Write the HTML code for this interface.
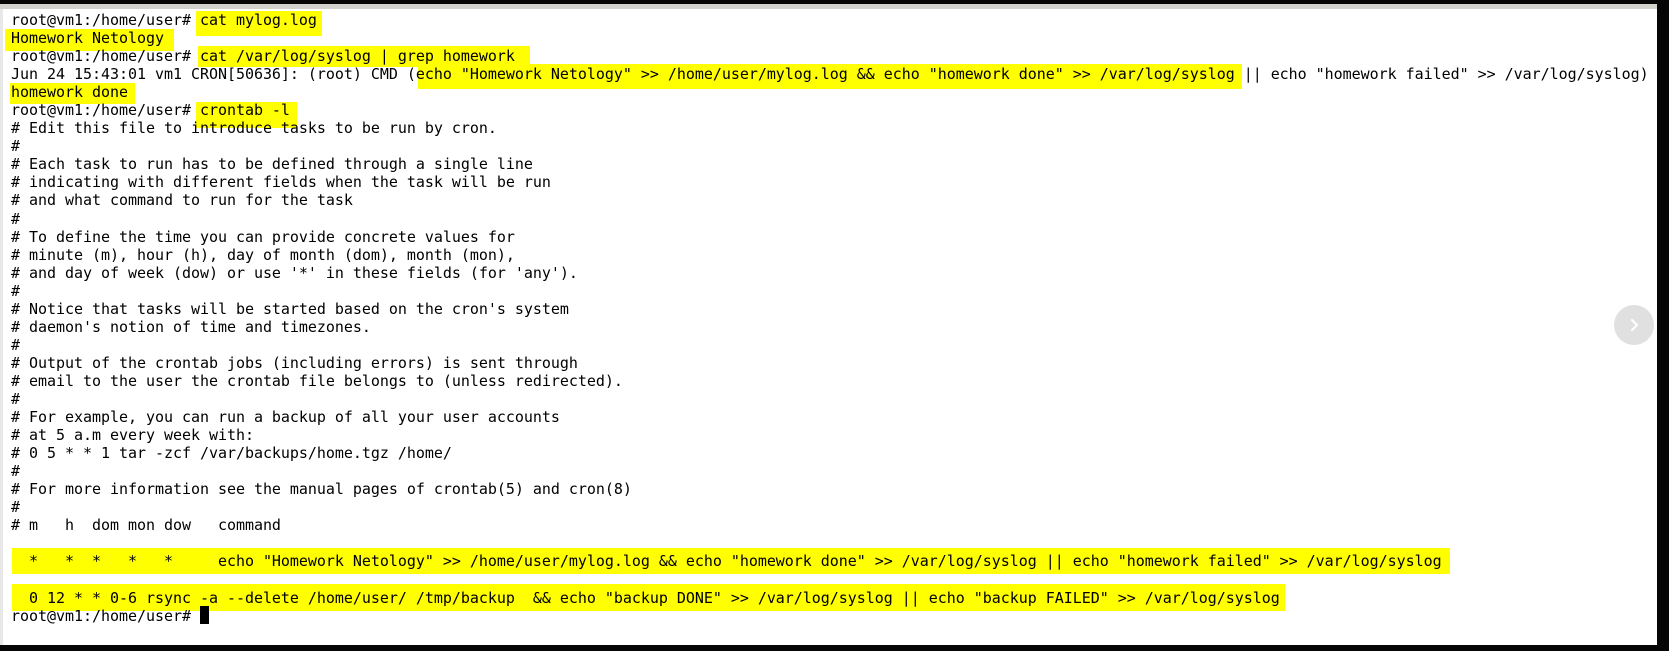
<!DOCTYPE html>
<html><head><meta charset="utf-8"><style>
html,body{margin:0;padding:0;}
body{width:1669px;height:651px;background:#060606;position:relative;overflow:hidden;}
#scr{position:absolute;left:0;top:4px;width:1657px;height:641px;background:#fff;}
#topbar{position:absolute;left:0;top:4px;width:1657px;height:5px;background:#d4d2cc;}
#leftbar{position:absolute;left:0;top:9px;width:3px;height:636px;background:#e8e8e8;}
.hl{position:absolute;background:#ffff00;}
pre{position:absolute;left:11px;top:11px;margin:0;font-family:"DejaVu Sans Mono","Liberation Mono",monospace;font-size:15px;letter-spacing:-0.033px;line-height:18.05px;color:#000;}
#cur{position:absolute;left:200px;top:606px;width:9px;height:18px;background:#000;}
#btn{position:absolute;left:1614px;top:305px;width:40px;height:40px;border-radius:50%;background:#e0e0e0;}
</style></head><body>
<div id="scr"></div><div id="topbar"></div><div id="leftbar"></div>
<div class="hl" style="left:196px;top:11px;width:126px;height:25px"></div>
<div class="hl" style="left:5px;top:29px;width:169px;height:22px"></div>
<div class="hl" style="left:198px;top:46px;width:332px;height:21px"></div>
<div class="hl" style="left:418px;top:64px;width:824px;height:25px"></div>
<div class="hl" style="left:10px;top:83px;width:125px;height:21px"></div>
<div class="hl" style="left:196px;top:102px;width:101px;height:26px"></div>
<div class="hl" style="left:12px;top:548px;width:1438px;height:26px"></div>
<div class="hl" style="left:12px;top:584px;width:1273px;height:27px"></div>
<pre>root@vm1:/home/user# cat mylog.log
Homework Netology
root@vm1:/home/user# cat /var/log/syslog | grep homework
Jun 24 15:43:01 vm1 CRON[50636]: (root) CMD (echo "Homework Netology" >> /home/user/mylog.log && echo "homework done" >> /var/log/syslog || echo "homework failed" >> /var/log/syslog)
homework done
root@vm1:/home/user# crontab -l
# Edit this file to introduce tasks to be run by cron.
#
# Each task to run has to be defined through a single line
# indicating with different fields when the task will be run
# and what command to run for the task
#
# To define the time you can provide concrete values for
# minute (m), hour (h), day of month (dom), month (mon),
# and day of week (dow) or use '*' in these fields (for 'any').
#
# Notice that tasks will be started based on the cron's system
# daemon's notion of time and timezones.
#
# Output of the crontab jobs (including errors) is sent through
# email to the user the crontab file belongs to (unless redirected).
#
# For example, you can run a backup of all your user accounts
# at 5 a.m every week with:
# 0 5 * * 1 tar -zcf /var/backups/home.tgz /home/
#
# For more information see the manual pages of crontab(5) and cron(8)
#
# m   h  dom mon dow   command

  *   *  *   *   *     echo "Homework Netology" >> /home/user/mylog.log && echo "homework done" >> /var/log/syslog || echo "homework failed" >> /var/log/syslog

  0 12 * * 0-6 rsync -a --delete /home/user/ /tmp/backup  && echo "backup DONE" >> /var/log/syslog || echo "backup FAILED" >> /var/log/syslog
root@vm1:/home/user# </pre>
<div id="cur"></div>
<div id="btn"><svg width="40" height="40" viewBox="0 0 40 40"><path d="M18 15 L23 20 L18 25" fill="none" stroke="#fff" stroke-width="2.2" stroke-linecap="round" stroke-linejoin="round"/></svg></div>
</body></html>
